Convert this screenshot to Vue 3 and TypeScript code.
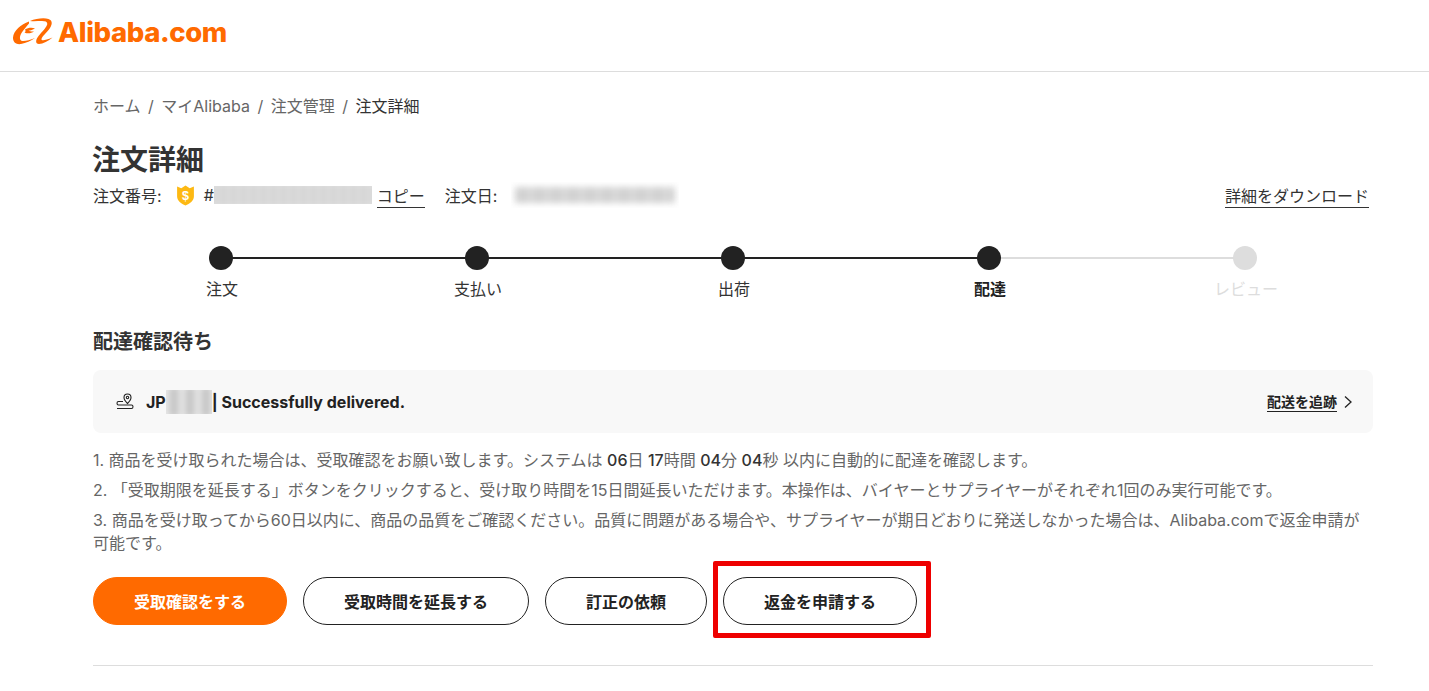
<script setup lang="ts">
interface Step { label: string; state: string }
const steps: Step[] = [
  { label: '注文', state: 'done' },
  { label: '支払い', state: 'done' },
  { label: '出荷', state: 'done' },
  { label: '配達', state: 'current' },
  { label: 'レビュー', state: 'todo' },
]
</script>

<template>
  <div class="page">
    <header class="top">
      <svg class="mark" width="40" height="27" viewBox="13 17 40 27">
        <path d="M29 20.500C21 23.500 13.500 29.500 13 36.500C12.800 41.500 16.500 43.800 21 43C26 42.200 31 39.800 35 37C30 38.800 25.500 40.300 22.500 40C19 39.500 19.500 35.500 21.500 32C23.500 28.500 27 25 29 22.500Z" fill="#ff6a00" />
        <path d="M25 28.500C28 26.500 32 26 35 27.500C33 28.800 30.500 29.500 28.500 29.700C30 30.500 32 30.700 34 30.200C31.500 32.500 27.500 33 24.500 31.500C25.500 30.800 26 30 25 28.500Z" fill="#ff6a00" />
        <path d="M30 20C36 17.500 44 16.500 48.500 18C52.500 19.300 52.500 23 50 27C47 31.500 42 35.500 41.500 38C41.200 40 45 39.500 52.500 36.500C48.500 39.800 43 43 39 43C35.500 43 35.500 39.800 37.500 36.500C40 32.500 45.500 28 47 24C48 21 46 20 42 20C38 20 34 20.500 30 20Z" fill="#ff6a00" />
      </svg>
      <span class="brand">Alibaba.com</span>
    </header>

    <main class="content">
      <nav class="crumbs">
        <span>ホーム</span><i>/</i><span>マイAlibaba</span><i>/</i><span>注文管理</span><i>/</i><span class="here">注文詳細</span>
      </nav>

      <h1>注文詳細</h1>
      <div class="meta">
        <div class="meta-left">
          <span>注文番号:</span>
          <svg class="shield" width="19" height="21" viewBox="0 0 18 20">
            <path d="M1 1.500L5 3L9 .5L13 3L17 1.500V11C17 15 13 18 9 19.500C5 18 1 15 1 11Z" fill="#fdb913" />
            <text x="9" y="14" text-anchor="middle" class="dollar">$</text>
          </svg>
          <span class="hash">#</span>
          <span class="blur order"></span>
          <a class="copy">コピー</a>
          <span class="date-label">注文日:</span>
          <span class="blur date"></span>
        </div>
        <a class="download">詳細をダウンロード</a>
      </div>

      <section class="stepper">
        <div v-for="(s, i) in steps" :key="s.label" class="step" :class="s.state">
          <div class="track">
            <span v-if="i < steps.length - 1" class="line" :class="{ pale: i === 3 }"></span>
            <span class="dot"></span>
          </div>
          <span class="step-label">{{ s.label }}</span>
        </div>
      </section>

      <h2>配達確認待ち</h2>

      <div class="tracking">
        <div class="track-left">
          <svg width="20" height="20" viewBox="0 0 20 20" fill="none" stroke="#222" stroke-width="1.100">
            <path d="M12.500 11.500C10.500 9.500 9 7.500 9 5.500A3.500 3.500 0 0 1 16 5.500C16 7.500 14.500 9.500 12.500 11.500Z" />
            <circle cx="12.500" cy="5.500" r="1.200" />
            <path d="M8 9.500H3.500C1.500 9.500 1.500 13 3.500 13H16.500C18.500 13 18.500 16.500 16.500 16.500H2" />
          </svg>
          <b class="jp">JP</b>
          <span class="blur code"></span>
          <b class="status">| Successfully delivered.</b>
        </div>
        <div class="track-right">
          <a>配送を追跡</a>
          <svg width="10" height="14" viewBox="0 0 10 14" fill="none" stroke="#222" stroke-width="1.300"><path d="M2 1.500L8 7L2 12.500" /></svg>
        </div>
      </div>

      <div class="notes">
        <p>1. 商品を受け取られた場合は、受取確認をお願い致します。システムは <em>06</em>日 <em>17</em>時間 <em>04</em>分 <em>04</em>秒 以内に自動的に配達を確認します。</p>
        <p>2. 「受取期限を延長する」ボタンをクリックすると、受け取り時間を15日間延長いただけます。本操作は、バイヤーとサプライヤーがそれぞれ1回のみ実行可能です。</p>
        <p>3. 商品を受け取ってから60日以内に、商品の品質をご確認ください。品質に問題がある場合や、サプライヤーが期日どおりに発送しなかった場合は、Alibaba.comで返金申請が可能です。</p>
      </div>

      <div class="actions">
        <button class="btn primary w194">受取確認をする</button>
        <button class="btn w226">受取時間を延長する</button>
        <button class="btn w162">訂正の依頼</button>
        <span class="highlight"><button class="btn w194">返金を申請する</button></span>
      </div>

      <hr class="rule" />
    </main>
  </div>
</template>

<style>
html, body { margin: 0; background: #fff; }
</style>

<style scoped>
.page { font-family: Inter, "Noto Sans CJK JP", sans-serif; color: #222; height: 691px; overflow: hidden; }
.top { border-bottom: 1px solid #ddd; display: flex; align-items: center; padding: 0 0 8px 13px; height: 63px; }
.mark { margin-right: 5px; }
.brand { font-family: Inter, sans-serif; font-weight: 800; font-size: 27.500px; color: #ff6a00; letter-spacing: -.4px; }
.content { width: 1280px; margin-left: 93px; }
.crumbs { display: flex; gap: 7.500px; margin-top: 24px; height: 20px; line-height: 20px; font-size: 16px; color: #666; }
.crumbs i { font-style: normal; }
.crumbs .here { color: #333; }
h1 { margin: 26px 0 0 -1px; font-size: 28px; line-height: 36px; font-weight: 700; color: #333; }
.meta { display: flex; justify-content: space-between; align-items: center; height: 24px; margin-top: 5px; font-size: 16px; color: #333; }
.meta-left { display: flex; align-items: center; }
.shield { margin-left: 14px; }
.dollar { font-size: 12px; font-weight: 700; fill: #fff; font-family: "Liberation Sans", sans-serif; }
.hash { margin-left: 9px; }
.blur { display: inline-block; position: relative; overflow: hidden; }
.blur::before { content: ""; position: absolute; inset: -4px; filter: blur(3px); background: repeating-linear-gradient(90deg, #d2d2d2 0 7px, #e6e6e6 7px 10px); }
.order { width: 158px; height: 18px; }
.copy, .download { text-decoration: none; border-bottom: 1px solid #333; }
.copy { margin-left: 5px; }
.date-label { margin-left: 20px; }
.date { width: 168px; height: 26px; margin-left: 14px; }
.date::before { inset: 5px 4px; background: repeating-linear-gradient(90deg, #d2d2d2 0 14px, #dedede 14px 17px); }
.download { margin-right: 4px; }
.stepper { display: flex; margin-top: 39px; }
.step { width: 256px; display: flex; flex-direction: column; align-items: center; }
.track { height: 24px; width: 100%; display: flex; justify-content: center; align-items: center; position: relative; }
.dot { width: 24px; height: 24px; border-radius: 50%; background: #222; position: relative; z-index: 1; }
.line { position: absolute; left: 50%; width: 100%; top: 11px; height: 2px; background: #222; }
.line.pale { background: #ddd; }
.todo .dot { background: #ddd; }
.step-label { margin-top: 8px; padding-left: 2px; font-size: 16px; line-height: 22px; color: #333; }
.current .step-label { font-weight: 700; color: #222; }
.todo .step-label { color: #ddd; }
h2 { margin: 29px 0 0; font-size: 20px; line-height: 26px; font-weight: 700; color: #333; }
.tracking { margin-top: 15px; height: 63px; background: #f8f8f8; border-radius: 8px; display: flex; justify-content: space-between; align-items: center; padding: 0 20px 0 22px; box-sizing: border-box; }
.track-left { display: flex; align-items: center; font-size: 16px; }
.jp { margin-left: 11px; font-weight: 700; }
.code { width: 46px; height: 24px; }
.code::before { background: repeating-linear-gradient(90deg, #e4e4e4 0 8px, #c4c4c4 8px 16px); }
.status { font-weight: 700; white-space: pre; }
.track-right { display: flex; align-items: center; gap: 6px; font-size: 14px; font-weight: 700; }
.track-right a { border-bottom: 1px solid #222; }
.notes { margin-top: 16px; font-size: 16px; color: #666; }
.notes p { margin: 0 0 7px; line-height: 23px; }
.notes em { font-style: normal; color: #333; font-weight: 500; }
.actions { display: flex; gap: 16px; margin-top: 22px; align-items: center; }
.btn { height: 48px; border-radius: 24px; border: 1px solid #222; background: #fff; color: #222; font: 700 16px Inter, "Noto Sans CJK JP", sans-serif; padding: 0; }
.primary { background: #ff6a00; border-color: #ff6a00; color: #fff; }
.w194 { width: 194px; }
.w226 { width: 226px; }
.w162 { width: 162px; }
.highlight { display: flex; position: relative; }
.highlight::after { content: ""; position: absolute; left: -10px; right: -14px; top: -16px; bottom: -13px; border: 5px solid #ee0000; border-radius: 2px; pointer-events: none; }
.rule { border: 0; border-top: 1px solid #ddd; margin: 40px 0 0; }
</style>
